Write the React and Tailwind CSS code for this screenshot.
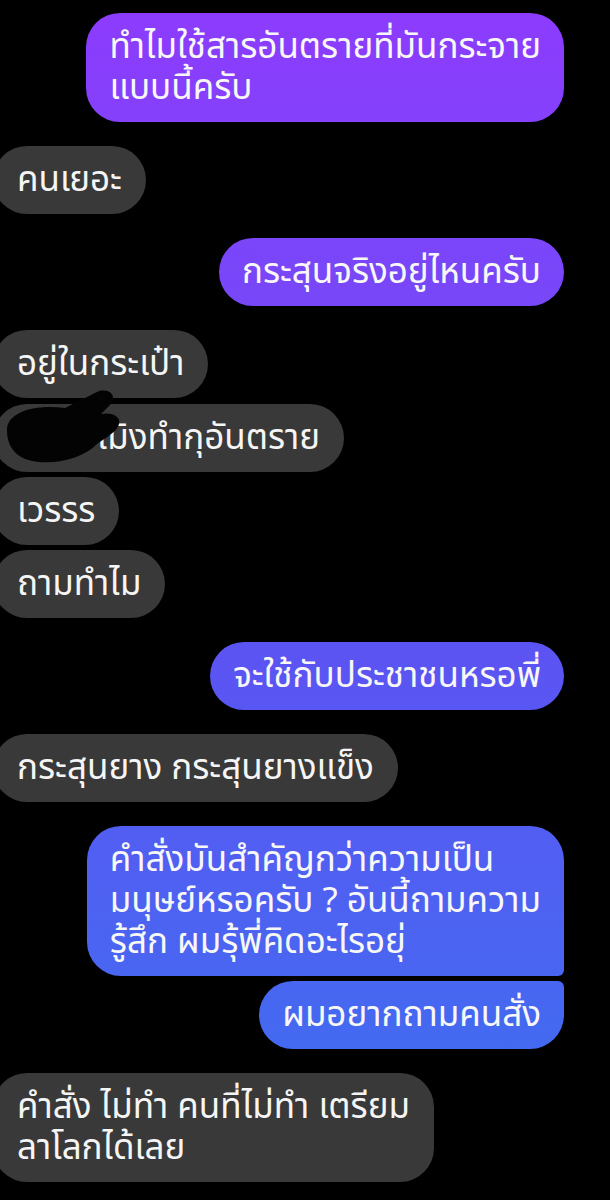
const fill =
  "bg-fixed bg-linear-to-b from-[#8d3bfd] via-[#5e50f3] to-[#3571f0]";

function Mine({ lines, shape = "rounded-[34px]", gap = "mt-6" }) {
  return (
    <div className={`${gap} flex justify-end pr-[46px]`}>
      <div
        className={`${fill} ${shape} px-[23px] py-[13.5px] text-[35px] leading-[41px] text-[#f7f7f7] whitespace-nowrap`}
      >
        {lines.map((l, i) => (
          <div key={i}>{l}</div>
        ))}
      </div>
    </div>
  );
}

function Theirs({ lines, gap = "mt-6", children }) {
  return (
    <div className={`${gap} flex justify-start`}>
      <div className="relative -ml-[7px] rounded-[34px] bg-[#393939] px-[24px] py-[13.5px] text-[35px] leading-[41px] text-[#f5f5f5] whitespace-nowrap">
        {children}
        {lines.map((l, i) => (
          <div key={i}>{l}</div>
        ))}
      </div>
    </div>
  );
}

function Scribble() {
  return (
    <svg
      className="absolute left-[12px] top-[-16px]"
      width="120"
      height="76"
      viewBox="0 -2 120 76"
    >
      <path
        d="M2 40 C2 22 30 14 60 18 L92 2 C104 -3 114 6 104 16 L96 24 C106 22 116 26 114 34 C112 42 100 48 92 54 C80 66 58 74 34 72 C12 70 2 58 2 40 Z"
        fill="#030303"
      />
    </svg>
  );
}

export default function App() {
  return (
    <div className="min-h-[1200px] w-[610px] overflow-hidden bg-black pt-[13px] pb-6 font-['Noto_Sans_Thai','Noto_Sans',sans-serif]">
      <Mine lines={["ทำไมใช้สารอันตรายที่มันกระจาย", "แบบนี้ครับ"]} gap="mt-0" />
      <Theirs lines={["คนเยอะ"]} />
      <Mine lines={["กระสุนจริงอยู่ไหนครับ"]} />

      <Theirs lines={["อยู่ในกระเป๋า"]} />
      <Theirs gap="mt-[6px]" lines={[]}>
        <span className="inline-block w-[80px]" />
        เมิงทำกุอันตราย
        <Scribble />
      </Theirs>
      <Theirs gap="mt-[5px]" lines={["เวรรร"]} />
      <Theirs gap="mt-[5px]" lines={["ถามทำไม"]} />

      <Mine lines={["จะใช้กับประชาชนหรอพี่"]} />
      <Theirs lines={["กระสุนยาง กระสุนยางแข็ง"]} />

      <Mine
        shape="rounded-[34px] rounded-br-[6px]"
        lines={[
          "คำสั่งมันสำคัญกว่าความเป็น",
          "มนุษย์หรอครับ ? อันนี้ถามความ",
          "รู้สึก ผมรุ้พี่คิดอะไรอยุ่",
        ]}
      />
      <Mine
        gap="mt-[5px]"
        shape="rounded-[34px] rounded-tr-[6px]"
        lines={["ผมอยากถามคนสั่ง"]}
      />

      <Theirs lines={["คำสั่ง ไม่ทำ คนที่ไม่ทำ เตรียม", "ลาโลกได้เลย"]} />
    </div>
  );
}
